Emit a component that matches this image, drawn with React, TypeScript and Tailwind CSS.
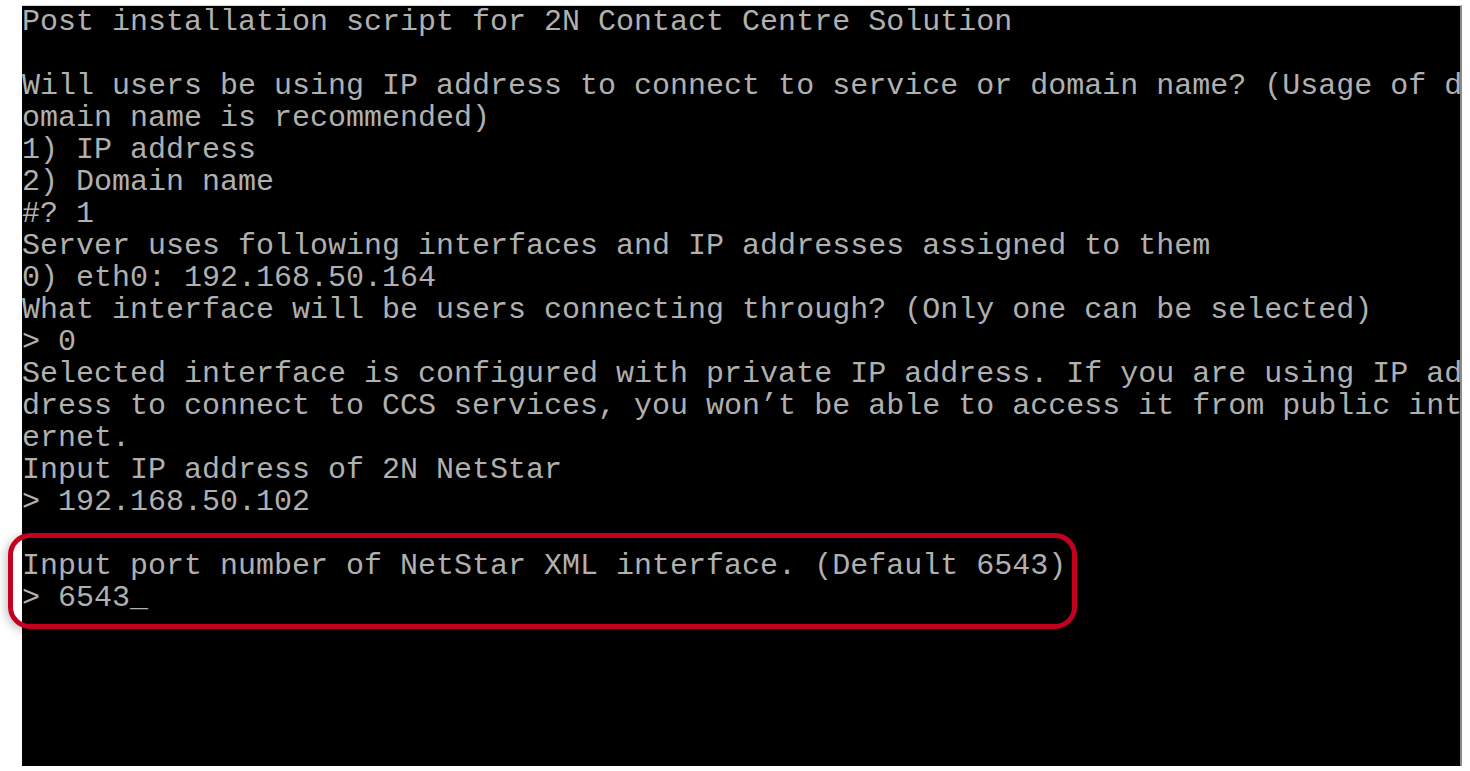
import React from 'react';

const lines = [
  'Post installation script for 2N Contact Centre Solution',
  '',
  'Will users be using IP address to connect to service or domain name? (Usage of d',
  'omain name is recommended)',
  '1) IP address',
  '2) Domain name',
  '#? 1',
  'Server uses following interfaces and IP addresses assigned to them',
  '0) eth0: 192.168.50.164',
  'What interface will be users connecting through? (Only one can be selected)',
  '> 0',
  'Selected interface is configured with private IP address. If you are using IP ad',
  'dress to connect to CCS services, you won’t be able to access it from public int',
  'ernet.',
  'Input IP address of 2N NetStar',
  '> 192.168.50.102',
  '',
  'Input port number of NetStar XML interface. (Default 6543)',
  '> 6543_',
];

export default function App() {
  return (
    <div className="relative h-[771px] w-full overflow-hidden bg-white pl-[22px] pt-[5px]">
      <div className="h-[761px] w-[1440px] overflow-hidden border-t border-r-2 border-t-[#d4d4e2] border-r-[#8a8a8a] bg-black">
        <div
          className="text-[30px] leading-[32px] text-[#b0b0b0]"
          style={{ fontFamily: '"Liberation Mono", "DejaVu Sans Mono", monospace' }}
        >
          {lines.map((line, i) => (
            <div key={i} className="h-[32px] whitespace-pre">
              {line}
            </div>
          ))}
        </div>
      </div>

      {/* highlight around the port prompt */}
      <div className="absolute left-[8px] top-[533px] h-[96px] w-[1069px] rounded-[22px] border-[5px] border-[#c5001f] shadow-[-2px_2px_10px_rgba(0,0,0,0.25)]" />
    </div>
  );
}
